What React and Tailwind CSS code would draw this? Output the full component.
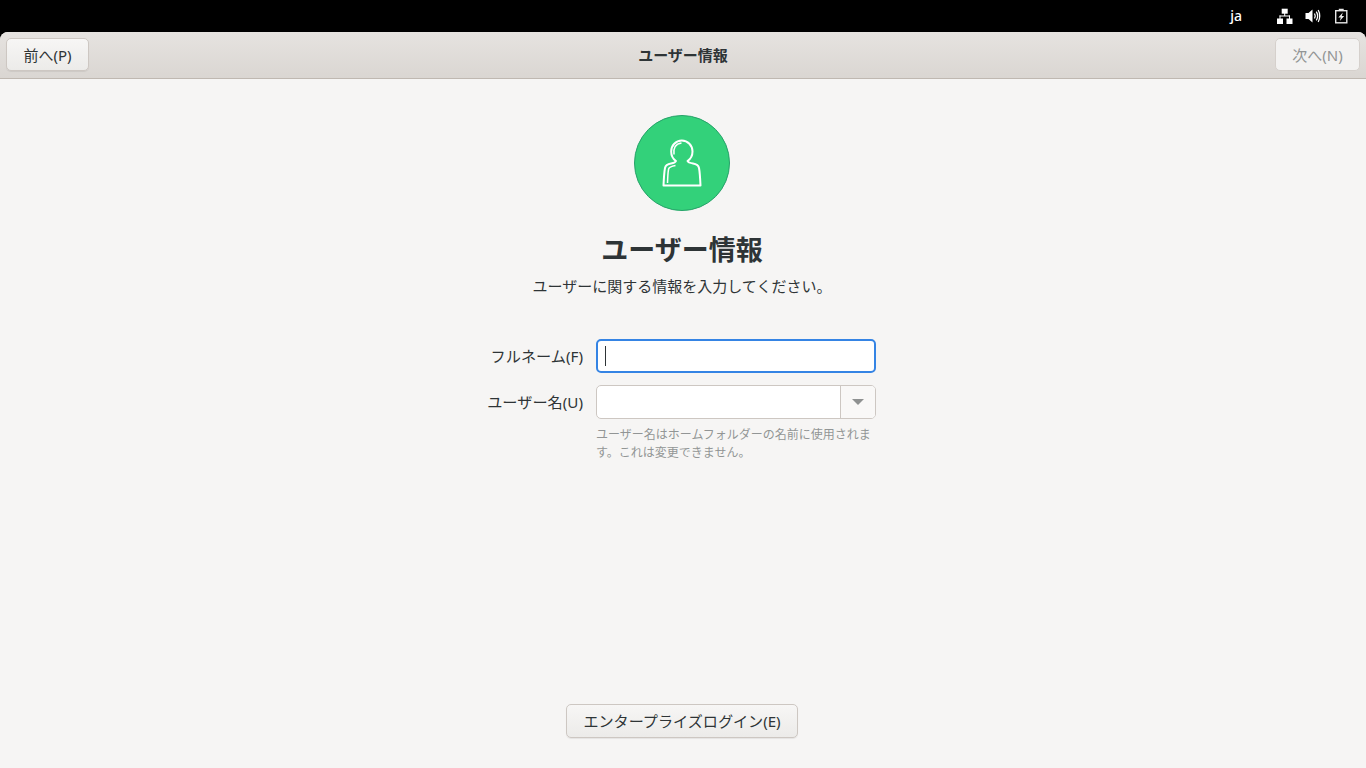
function UserIcon() {
  return (
    <svg width="40" height="48" viewBox="0 0 40 48" fill="none" stroke="#fff" strokeWidth="2" strokeLinejoin="round">
      <path d="M1.5 46.5 H38.5 C38.2 40 37.8 33 37 29 C36.4 26 34.4 25 31 24.5 C28 24 26 23.4 25.5 22 C28.6 20 30.5 16.6 30.5 12.5 C30.5 6.4 25.8 1.5 19.8 1.5 C13.8 1.5 9.2 6.4 9.2 12.5 C9.2 16.6 11 20 14 22 C13.5 23.4 12 24 9 24.5 C5.6 25 3.6 26 3 29 C2.2 33 1.8 40 1.5 46.5 Z" />
      <path d="M5.5 44 C5.7 38 6 33 6.6 30 C7 28 9 27.2 13.5 26.4" strokeWidth="1.5" />
      <path d="M12 15.5 C11 9.5 13.5 4.6 19.5 3.9" strokeWidth="1.5" />
    </svg>
  );
}
function NetIcon() {
  return (
    <svg width="16" height="16" viewBox="0 0 16 16" fill="#fff">
      <rect x="4.7" y="0.7" width="6" height="5" />
      <rect x="0" y="10.5" width="6" height="5.5" />
      <rect x="9.5" y="10.5" width="6" height="5.5" />
      <rect x="7.2" y="5" width="1" height="3" />
      <rect x="2.5" y="7.5" width="10.5" height="1" />
      <rect x="2.5" y="7.5" width="1" height="3.5" />
      <rect x="12" y="7.5" width="1" height="3.5" />
    </svg>
  );
}
function VolIcon() {
  return (
    <svg width="16" height="16" viewBox="0 0 16 16" fill="none">
      <path d="M0.5 5 H3.5 L7.5 1.5 V14.5 L3.5 11 H0.5 Z" fill="#fff" />
      <path d="M9.5 5.5 C10.4 7 10.4 9 9.5 10.5" stroke="#fff" strokeWidth="1.3" />
      <path d="M11.3 3.6 C12.9 6.2 12.9 9.8 11.3 12.4" stroke="#fff" strokeWidth="1.3" />
      <path d="M13.2 2 C15.2 5.4 15.2 10.6 13.2 14" stroke="#fff" strokeWidth="1.3" />
    </svg>
  );
}
function BatIcon() {
  return (
    <svg width="16" height="16" viewBox="0 0 16 16" fill="none">
      <path d="M5.8 0.7 H10.7 V2 H14.5 V15.5 H2 V2 H5.8 Z" fill="#e8e8e8" />
      <rect x="3.4" y="3.4" width="9.7" height="10.7" fill="#000" />
      <path d="M9.8 4.5 L5.3 9.5 H7.8 L6.8 13 L11.2 8 H8.8 Z" fill="#e8e8e8" />
    </svg>
  );
}
export default function App() {
  return (
    <div className="w-[1366px] h-[768px] overflow-hidden bg-black flex flex-col text-[#2e3436] font-['Noto_Sans','Noto_Sans_CJK_JP',sans-serif]">
      <div className="h-8 shrink-0 flex items-center justify-end text-white text-sm">
        <span className="mr-[35px] font-medium">ja</span>
        <span className="flex items-center gap-3 mr-[17px]">
          <NetIcon /><VolIcon /><BatIcon />
        </span>
      </div>
      <div className="flex-1 flex flex-col rounded-t-[8px] overflow-hidden bg-[#f6f5f4]">
        <div className="h-[47px] shrink-0 flex items-center justify-between px-[6px] bg-gradient-to-b from-[#e6e3e0] to-[#dad6d2] border-b border-[#bfb8b1] relative">
          <button className="w-[83px] h-[33px] -mt-px pt-px rounded-[5px] border border-[#cdc7c2] bg-gradient-to-b from-[#f7f6f5] to-[#ecebe9] text-[15px] text-[#2e3436] shadow-[0_1px_1px_rgba(0,0,0,0.07)]">前へ(P)</button>
          <span className="absolute left-0 right-0 text-center text-[15px] font-bold leading-[20px]">ユーザー情報</span>
          <button className="w-[85px] h-[33px] -mt-px pt-px rounded-[5px] border border-[#d5d0cc] bg-[#f3f2f1] text-[15px] text-[#929595] relative">次へ(N)</button>
        </div>
        <div className="flex-1 flex flex-col items-center relative pr-[2px]">
          <div className="mt-9 w-24 h-24 rounded-full bg-[#33d17a] border border-[#26a269] flex items-center justify-center">
            <UserIcon />
          </div>
          <h1 className="mt-[17px] text-[27px] leading-[44px] font-bold text-[#2e3436]">ユーザー情報</h1>
          <p className="mt-[2px] text-[15px] leading-[24px]">ユーザーに関する情報を入力してください。</p>
          <div className="mt-[41px] w-[280px] ml-[108px] flex flex-col">
            <div className="flex items-center relative">
              <label className="absolute right-[293px] whitespace-nowrap text-[15.2px]">フルネーム(F)</label>
              <div className="w-[280px] h-[34px] rounded-[5px] border-2 border-[#3584e4] bg-white flex items-center pl-[7px]">
                <span className="w-px h-[20px] bg-[#2e3436]" />
              </div>
            </div>
            <div className="mt-3 flex items-center relative">
              <label className="absolute right-[293px] whitespace-nowrap text-[15.2px]">ユーザー名(U)</label>
              <div className="w-[280px] h-[34px] rounded-[5px] border border-[#cdc7c2] bg-white flex overflow-hidden">
                <div className="flex-1" />
                <div className="w-[35px] border-l border-[#cdc7c2] bg-[#f9f8f7] flex items-center justify-center">
                  <span className="w-0 h-0 border-l-[6px] border-r-[6px] border-t-[6px] border-l-transparent border-r-transparent border-t-[#8f9191]" />
                </div>
              </div>
            </div>
            <p className="mt-[7px] text-[12px] leading-[18px] text-[#929595]">ユーザー名はホームフォルダーの名前に使用されます。これは変更できません。</p>
          </div>
          <button className="absolute top-[625px] left-[566px] w-[232px] h-[34px] rounded-[5px] border border-[#cdc7c2] bg-gradient-to-b from-[#f7f6f5] to-[#ecebe9] text-[15.1px] text-[#2e3436] shadow-[0_1px_1px_rgba(0,0,0,0.07)]">エンタープライズログイン(E)</button>
        </div>
      </div>
    </div>
  );
}
